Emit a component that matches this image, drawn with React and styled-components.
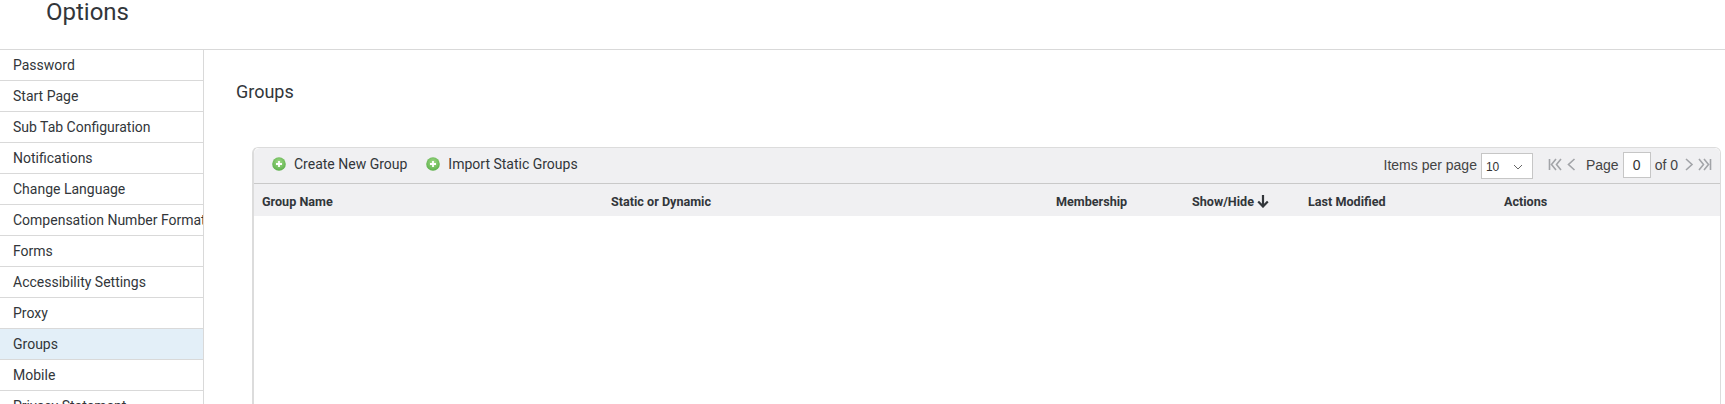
import React from "react";
import styled, { createGlobalStyle } from "styled-components";

const GlobalStyle = createGlobalStyle`
  html, body {
    margin: 0;
    padding: 0;
    height: 100%;
    overflow: hidden;
    background: #fff;
    font-family: Roboto, "Liberation Sans", sans-serif;
    color: #32363a;
  }
`;

const menuItems = [
  "Password",
  "Start Page",
  "Sub Tab Configuration",
  "Notifications",
  "Change Language",
  "Compensation Number Format",
  "Forms",
  "Accessibility Settings",
  "Proxy",
  "Groups",
  "Mobile",
  "Privacy Statement",
];

const columns = [
  { label: "Group Name", width: 349 },
  { label: "Static or Dynamic", width: 445 },
  { label: "Membership", width: 136 },
  { label: "Show/Hide", width: 116, sorted: true },
  { label: "Last Modified", width: 196 },
  { label: "Actions", width: 150 },
];

const AddIcon = () => (
  <svg width="14" height="14" viewBox="0 0 14 14">
    <defs>
      <radialGradient id="addGreen" cx="50%" cy="40%" r="60%">
        <stop offset="0%" stopColor="#a5dc8c" />
        <stop offset="100%" stopColor="#5cb04a" />
      </radialGradient>
    </defs>
    <circle cx="7" cy="7" r="6.8" fill="url(#addGreen)" />
    <path d="M7 4v6M4 7h6" stroke="#fff" strokeWidth="1.8" />
  </svg>
);

const PagerIcon = ({ type }) => {
  const paths = {
    first: "M1.5 2v11M8 2L3.5 7.5 8 13M13 2L8.5 7.5 13 13",
    prev: "M7.5 2L1.5 7.5l6 5.5",
    next: "M1 2l6 5.5L1 13",
    last: "M1 2l4.5 5.5L1 13M6 2l4.5 5.5L6 13M12.5 2v11",
  };
  const wide = type === "first" || type === "last";
  return (
    <svg width={wide ? 14 : 9} height="15" viewBox={wide ? "0 0 14 15" : "0 0 9 15"}>
      <path d={paths[type]} fill="none" stroke="#a2a4a8" strokeWidth="1.6" />
    </svg>
  );
};

const App = () => {
  return (
    <Page>
      <GlobalStyle />
      <Header>
        <Title>Options</Title>
      </Header>
      <Body>
        <Sidebar>
          {menuItems.map((item) => (
            <MenuItem key={item} $active={item === "Groups"}>
              {item}
            </MenuItem>
          ))}
        </Sidebar>
        <Content>
          <Heading>Groups</Heading>
          <Panel>
            <Toolbar>
              <Actions>
                <ActionLink>
                  <AddIcon />
                  Create New Group
                </ActionLink>
                <ActionLink>
                  <AddIcon />
                  Import Static Groups
                </ActionLink>
              </Actions>
              <Pager>
                <PagerText>Items per page</PagerText>
                <PageSize>
                  10
                  <svg width="10" height="6" viewBox="0 0 10 6">
                    <path d="M1 1l4 4 4-4" fill="none" stroke="#666" strokeWidth="1" />
                  </svg>
                </PageSize>
                <PagerIcons $gap={5} $left={15} $right={6}>
                  <PagerIcon type="first" />
                  <PagerIcon type="prev" />
                </PagerIcons>
                <PagerText>Page</PagerText>
                <PageInput>0</PageInput>
                <PagerText>of 0</PagerText>
                <PagerIcons $gap={4} $left={3} $right={0}>
                  <PagerIcon type="next" />
                  <PagerIcon type="last" />
                </PagerIcons>
              </Pager>
            </Toolbar>
            <TableHead>
              {columns.map((col) => (
                <HeadCell key={col.label} $width={col.width}>
                  {col.label}
                  {col.sorted && (
                    <svg width="12" height="14" viewBox="0 0 12 14">
                      <path d="M6 1v11.5M1.2 7.5L6 12.5l4.8-5" fill="none" stroke="#32363a" strokeWidth="2.2" />
                    </svg>
                  )}
                </HeadCell>
              ))}
            </TableHead>
          </Panel>
        </Content>
      </Body>
    </Page>
  );
};

export default App;

const Page = styled.div`
  width: 1725px;
  height: 404px;
  overflow: hidden;
`;

const Header = styled.div`
  height: 50px;
  box-sizing: border-box;
  padding-left: 46px;
  border-bottom: 1px solid #d9d9d9;
`;

const Title = styled.div`
  font-size: 24px;
  line-height: 25px;
  color: #32363a;
`;

const Body = styled.div`
  display: flex;
`;

const Sidebar = styled.div`
  width: 204px;
  box-sizing: border-box;
  flex-shrink: 0;
  border-right: 1px solid #d9d9d9;
  height: 354px;
  overflow: hidden;
`;

const MenuItem = styled.div`
  height: 31px;
  box-sizing: border-box;
  padding-left: 13px;
  border-bottom: 1px solid #d9d9d9;
  font-size: 14px;
  line-height: 30px;
  white-space: nowrap;
  overflow: hidden;
  color: #32363a;
  background: ${(props) => (props.$active ? "#e3eff8" : "#fff")};
`;

const Content = styled.div`
  flex: 1;
  padding: 30px 4px 0 32px;
  min-width: 0;
`;

const Heading = styled.div`
  font-size: 18px;
  line-height: 24px;
  color: #32363a;
  margin-bottom: 43px;
`;

const Panel = styled.div`
  margin-left: 16px;
  height: 300px;
  border: 1px solid #dcdcdc;
  border-left-width: 2px;
  border-radius: 6px 6px 0 0;
`;

const Toolbar = styled.div`
  height: 35px;
  background: #f0f0f2;
  border-bottom: 1px solid #c9c9c9;
  border-radius: 6px 6px 0 0;
  display: flex;
  align-items: center;
  justify-content: space-between;
`;

const Actions = styled.div`
  display: flex;
  padding: 0 0 3px 18px;
  gap: 19px;
`;

const ActionLink = styled.div`
  display: flex;
  align-items: center;
  gap: 8px;
  font-size: 14px;
  color: #32363a;
`;

const Pager = styled.div`
  display: flex;
  align-items: center;
  padding: 0 8px 2px 0;
`;

const PagerText = styled.span`
  font-family: "Liberation Sans", Arial, sans-serif;
  font-size: 14px;
  color: #444;
  margin: 0 4px;
`;

const PageSize = styled.div`
  width: 52px;
  height: 26px;
  margin-top: 3px;
  box-sizing: border-box;
  border: 1px solid #c6c6c6;
  background: #fff;
  display: flex;
  align-items: center;
  justify-content: space-between;
  padding: 2px 9px 0 4px;
  font-family: "Liberation Sans", Arial, sans-serif;
  font-size: 12px;
  color: #333;
`;

const PagerIcons = styled.div`
  display: flex;
  align-items: center;
  gap: ${(props) => props.$gap}px;
  margin: 0 ${(props) => props.$right}px 0 ${(props) => props.$left}px;
`;

const PageInput = styled.div`
  width: 28px;
  height: 26px;
  box-sizing: border-box;
  border: 1px solid #c6c6c6;
  background: #fff;
  text-align: center;
  font-family: "Liberation Sans", Arial, sans-serif;
  font-size: 14px;
  line-height: 24px;
  color: #333;
`;

const TableHead = styled.div`
  height: 32px;
  box-sizing: border-box;
  padding: 2px 0 0 8px;
  background: #f0f0f2;
  display: flex;
  align-items: center;
`;

const HeadCell = styled.div`
  width: ${(props) => props.$width}px;
  flex-shrink: 0;
  display: flex;
  align-items: center;
  gap: 3px;
  font-size: 12.6px;
  font-weight: 700;
  color: #32363a;
`;
